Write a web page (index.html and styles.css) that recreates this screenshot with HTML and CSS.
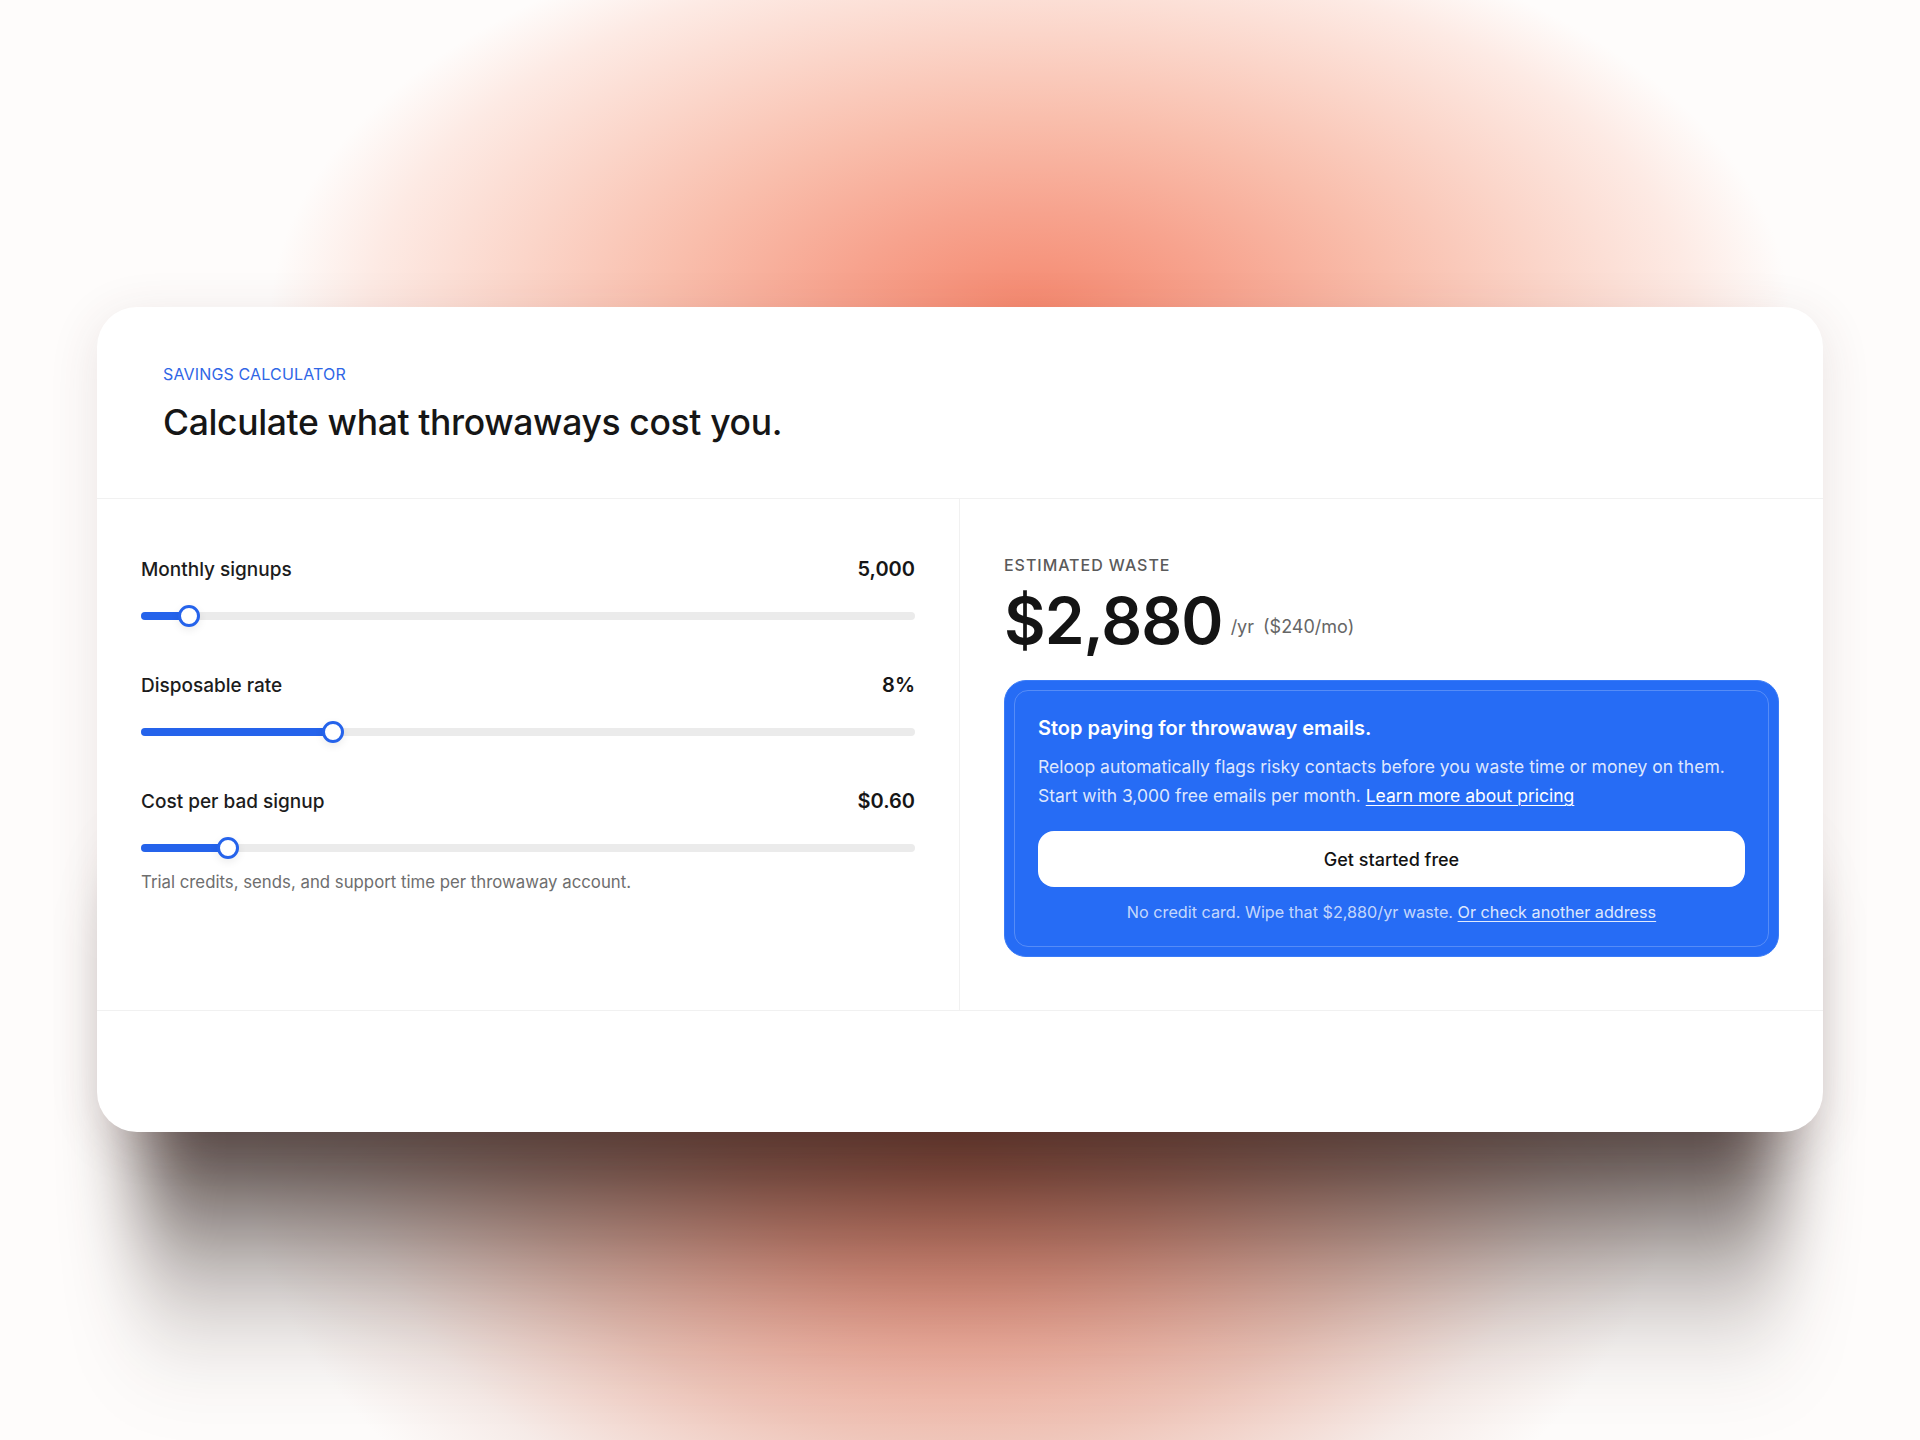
FILE: index.html
```html
<!DOCTYPE html>
<html lang="en">
<head>
<meta charset="utf-8">
<title>Savings calculator</title>
<link rel="stylesheet" href="styles.css">
</head>
<body>
<main class="stage">
  <section class="card">
    <header class="card-head">
      <p class="eyebrow">SAVINGS CALCULATOR</p>
      <h1 class="title">Calculate what throwaways cost you.</h1>
    </header>
    <div class="card-body">
      <div class="inputs">
        <div class="field">
          <div class="field-row"><span class="field-label">Monthly signups</span><span class="field-value">5,000</span></div>
          <div class="slider"><div class="slider-track"><div class="slider-fill" style="width:6.2%"></div></div><span class="slider-thumb" style="left:6.2%"></span></div>
        </div>
        <div class="field">
          <div class="field-row"><span class="field-label">Disposable rate</span><span class="field-value">8%</span></div>
          <div class="slider"><div class="slider-track"><div class="slider-fill" style="width:24.8%"></div></div><span class="slider-thumb" style="left:24.8%"></span></div>
        </div>
        <div class="field">
          <div class="field-row"><span class="field-label">Cost per bad signup</span><span class="field-value">$0.60</span></div>
          <div class="slider"><div class="slider-track"><div class="slider-fill" style="width:11.2%"></div></div><span class="slider-thumb" style="left:11.2%"></span></div>
          <p class="field-help">Trial credits, sends, and support time per throwaway account.</p>
        </div>
      </div>
      <div class="result">
        <p class="result-label">ESTIMATED WASTE</p>
        <div class="result-figure">
          <span class="result-amount">$2,880</span>
          <span class="result-unit">/yr</span>
          <span class="result-unit">($240/mo)</span>
        </div>
        <div class="cta">
          <h2 class="cta-title">Stop paying for throwaway emails.</h2>
          <p class="cta-text">Reloop automatically flags risky contacts before you waste time or money on them. Start with 3,000 free emails per month. <a class="cta-link" href="#">Learn more about pricing</a></p>
          <button class="cta-button" type="button">Get started free</button>
          <p class="cta-note">No credit card. Wipe that $2,880/yr waste. <a class="cta-note-link" href="#">Or check another address</a></p>
        </div>
      </div>
    </div>
    <div class="card-foot"></div>
  </section>
</main>
</body>
</html>
```

FILE: styles.css
```css
* { box-sizing: border-box; }

html, body {
  margin: 0;
  padding: 0;
}

body {
  min-height: 1440px;
  font-family: Inter, "Noto Sans", "Liberation Sans", sans-serif;
  color: #1a1a1a;
  background:
    radial-gradient(ellipse 760px 420px at 1030px 320px,
      rgb(245,134,108) 0%,
      rgb(247,163,142) 26%,
      rgb(249,190,172) 48%,
      rgb(251,213,201) 68%,
      rgb(253,234,228) 87%,
      rgba(255,250,248,0) 100%),
    radial-gradient(ellipse 720px 520px at 960px 1130px,
      rgb(245,134,108) 0%,
      rgb(243,160,140) 30%,
      rgb(240,198,186) 60%,
      rgba(242,225,220,0.6) 84%,
      rgba(255,255,255,0) 100%),
    #fefcfb;
  overflow: hidden;
}

.stage {
  position: relative;
  padding-top: 307px;
  display: flex;
  justify-content: center;
}

/* soft shadow cast beneath the card */
.stage::before {
  content: "";
  position: absolute;
  left: 140px;
  right: 140px;
  top: 860px;
  height: 560px;
  background: linear-gradient(to bottom,
    rgba(40, 24, 20, 0.8) 0%,
    rgba(40, 24, 20, 0.8) 48%,
    rgba(40, 24, 20, 0.55) 60%,
    rgba(40, 24, 20, 0.27) 72%,
    rgba(40, 24, 20, 0.09) 84%,
    rgba(40, 24, 20, 0) 96%);
  filter: blur(36px);
  border-radius: 60px;
  z-index: 0;
}

.card {
  position: relative;
  z-index: 1;
  width: 1726px;
  background: #ffffff;
  border-radius: 40px;
  overflow: hidden;
  box-shadow: 0 10px 50px rgba(90, 50, 50, 0.12);
}

.card-head {
  padding: 57px 66px 54px;
  border-bottom: 1px solid #f1f1f1;
}

.eyebrow {
  margin: 0;
  font-size: 16px;
  line-height: 20px;
  font-weight: 400;
  letter-spacing: 0.01em;
  color: #2f66e6;
}

.title {
  margin: 18px 0 0;
  font-size: 35.5px;
  line-height: 42px;
  font-weight: 500;
  letter-spacing: -0.01em;
  color: #161616;
}

.card-body {
  display: grid;
  grid-template-columns: 1fr 1fr;
  border-bottom: 1px solid #f1f1f1;
}

.inputs {
  padding: 56px 44px 53px;
  border-right: 1px solid #f1f1f1;
  display: flex;
  flex-direction: column;
  gap: 44px;
}

.field {
  display: flex;
  flex-direction: column;
  gap: 22px;
}

.field-row {
  display: flex;
  justify-content: space-between;
  align-items: baseline;
  height: 28px;
  line-height: 28px;
}

.field-label {
  font-size: 19px;
  font-weight: 500;
  color: #1c1c1c;
}

.field-value {
  font-size: 20px;
  font-weight: 600;
  color: #161616;
}

.slider {
  position: relative;
  height: 22px;
  display: flex;
  align-items: center;
}

.slider-track {
  width: 100%;
  height: 8px;
  border-radius: 4px;
  background: #ebebeb;
}

.slider-fill {
  height: 100%;
  border-radius: 4px;
  background: #2563eb;
}

.slider-thumb {
  position: absolute;
  top: 0;
  width: 22px;
  height: 22px;
  margin-left: -11px;
  border-radius: 50%;
  background: #ffffff;
  border: 3px solid #2563eb;
  box-shadow: 0 3px 8px rgba(0, 0, 0, 0.08);
}

.field-help {
  margin: -10px 0 0;
  font-size: 16.8px;
  line-height: 22px;
  color: #6e6e6e;
}

.result {
  padding: 56px 44px 53px;
}

.result-label {
  margin: 0;
  font-size: 16px;
  line-height: 20px;
  font-weight: 500;
  letter-spacing: 0.06em;
  color: #5a5a5a;
}

.result-figure {
  margin-top: 6px;
  display: flex;
  align-items: flex-end;
  gap: 9px;
}

.result-amount {
  font-size: 64px;
  line-height: 80px;
  font-weight: 600;
  letter-spacing: -0.015em;
  color: #141414;
  margin-right: -1px;
}

.result-unit {
  font-size: 18px;
  line-height: 24px;
  color: #666666;
  margin-bottom: 22px;
}

.cta {
  position: relative;
  margin-top: 19px;
  padding: 33px;
  border: 1px solid #3a7bf7;
  border-radius: 22px;
  background: #266cf5;
  color: #ffffff;
}

.cta::after {
  content: "";
  position: absolute;
  inset: 9px;
  border: 1px solid rgba(255, 255, 255, 0.22);
  border-radius: 14px;
  pointer-events: none;
}

.cta-title {
  margin: 0;
  font-size: 20px;
  line-height: 28px;
  font-weight: 600;
  color: #ffffff;
}

.cta-text {
  margin: 10px 0 0;
  font-size: 17.5px;
  line-height: 29px;
  color: rgba(255, 255, 255, 0.86);
}

.cta-link {
  color: #ffffff;
  text-decoration: underline;
  text-decoration-thickness: 1px;
  text-underline-offset: 3px;
}

.cta-button {
  position: relative;
  z-index: 1;
  display: block;
  width: 100%;
  height: 56px;
  margin-top: 21px;
  border: 0;
  border-radius: 16px;
  background: #ffffff;
  font-family: inherit;
  font-size: 18px;
  font-weight: 500;
  color: #121212;
  cursor: pointer;
}

.cta-note {
  margin: 14px 0 0;
  text-align: center;
  font-size: 16.2px;
  line-height: 22px;
  color: rgba(255, 255, 255, 0.74);
}

.cta-note-link {
  color: rgba(255, 255, 255, 0.86);
  text-decoration: underline;
  text-decoration-thickness: 1px;
  text-underline-offset: 3px;
}

.card-foot {
  height: 121px;
}
```
